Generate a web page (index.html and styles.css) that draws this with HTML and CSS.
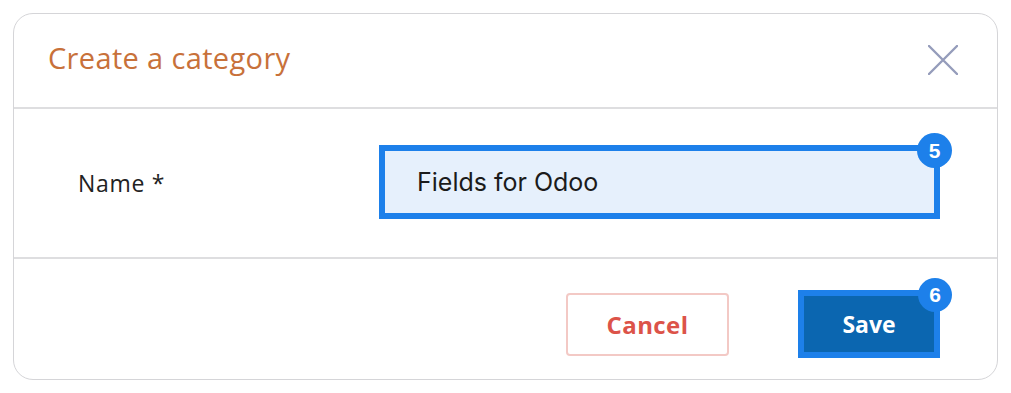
FILE: index.html
```html
<!DOCTYPE html>
<html lang="en">
<head>
<meta charset="utf-8">
<title>Create a category</title>
<link rel="stylesheet" href="styles.css">
</head>
<body>
<div class="dialog">
  <div class="dialog-header">
    <h1 class="dialog-title">Create a category</h1>
    <button class="close-btn" aria-label="Close">
      <svg width="30" height="30" viewBox="0 0 30 30"><path d="M1 1 L29 29 M29 1 L1 29" stroke="#959cbb" stroke-width="2.4" fill="none" stroke-linecap="round"/></svg>
    </button>
  </div>
  <div class="dialog-body">
    <label class="field-label">Name *</label>
    <div class="field-wrap">
      <div class="field-input">Fields for Odoo</div>
      <span class="badge">5</span>
    </div>
  </div>
  <div class="dialog-footer">
    <button class="btn btn-cancel">Cancel</button>
    <div class="save-wrap">
      <button class="btn btn-save">Save</button>
      <span class="badge">6</span>
    </div>
  </div>
</div>
</body>
</html>
```
FILE: styles.css
```css
* { box-sizing: border-box; }
html, body { margin: 0; padding: 0; background: #ffffff; }
body {
  font-family: "Open Sans", "Liberation Sans", sans-serif;
  padding: 13px;
}
.dialog {
  width: 985px;
  height: 367px;
  border: 1px solid #d5d5d8;
  border-radius: 20px;
  background: #fff;
  display: flex;
  flex-direction: column;
}
.dialog-header {
  height: 95px;
  border-bottom: 2px solid #dedee0;
  display: flex;
  align-items: center;
  justify-content: space-between;
  padding: 0 39px 2px 34px;
}
.dialog-title {
  margin: 0 0 4px 0;
  font-weight: 400;
  font-size: 29px;
  color: #c8713a;
  letter-spacing: 0.35px;
}
.close-btn {
  border: 0;
  background: none;
  padding: 0;
  width: 30px;
  height: 30px;
  display: flex;
}
.dialog-body {
  height: 150px;
  border-bottom: 2px solid #dedee0;
  display: grid;
  grid-template-columns: 301px 1fr;
  align-items: center;
  padding: 0 57px 2px 64px;
}
.field-label {
  font-size: 23px;
  letter-spacing: 0.7px;
  color: #222;
  padding-top: 1px;
}
.field-wrap { position: relative; }
.field-input {
  height: 74px;
  border: 6px solid #1d80ea;
  background: #e6f0fc;
  display: flex;
  align-items: center;
  padding-left: 32px;
  font-family: "Inter", "Open Sans", sans-serif;
  font-size: 25px;
  color: #1b1b1b;
}
.badge {
  position: absolute;
  top: -12px;
  right: -12px;
  width: 35px;
  height: 35px;
  border-radius: 50%;
  background: #1d80ea;
  color: #fff;
  font-family: "Liberation Sans", sans-serif;
  font-weight: 700;
  font-size: 21px;
  display: flex;
  align-items: center;
  justify-content: center;
}
.dialog-footer {
  flex: 1;
  display: flex;
  align-items: center;
  justify-content: flex-end;
  gap: 69px;
  padding: 10px 57px 0 0;
}
.btn {
  font-family: "Open Sans", "Liberation Sans", sans-serif;
  font-weight: 700;
  cursor: pointer;
}
.btn-cancel {
  width: 163px;
  height: 63px;
  background: #fff;
  border: 2px solid #f3c9c5;
  border-radius: 4px;
  color: #dc5349;
  font-size: 24px;
  letter-spacing: 0.4px;
}
.save-wrap { position: relative; }
.btn-save {
  width: 142px;
  height: 68px;
  background: #0b66b0;
  border: 6px solid #1d80ea;
  color: #fff;
  font-size: 23px;
  display: block;
}
.save-wrap .badge { top: -12px; right: -12px; width: 34px; height: 34px; }
```
